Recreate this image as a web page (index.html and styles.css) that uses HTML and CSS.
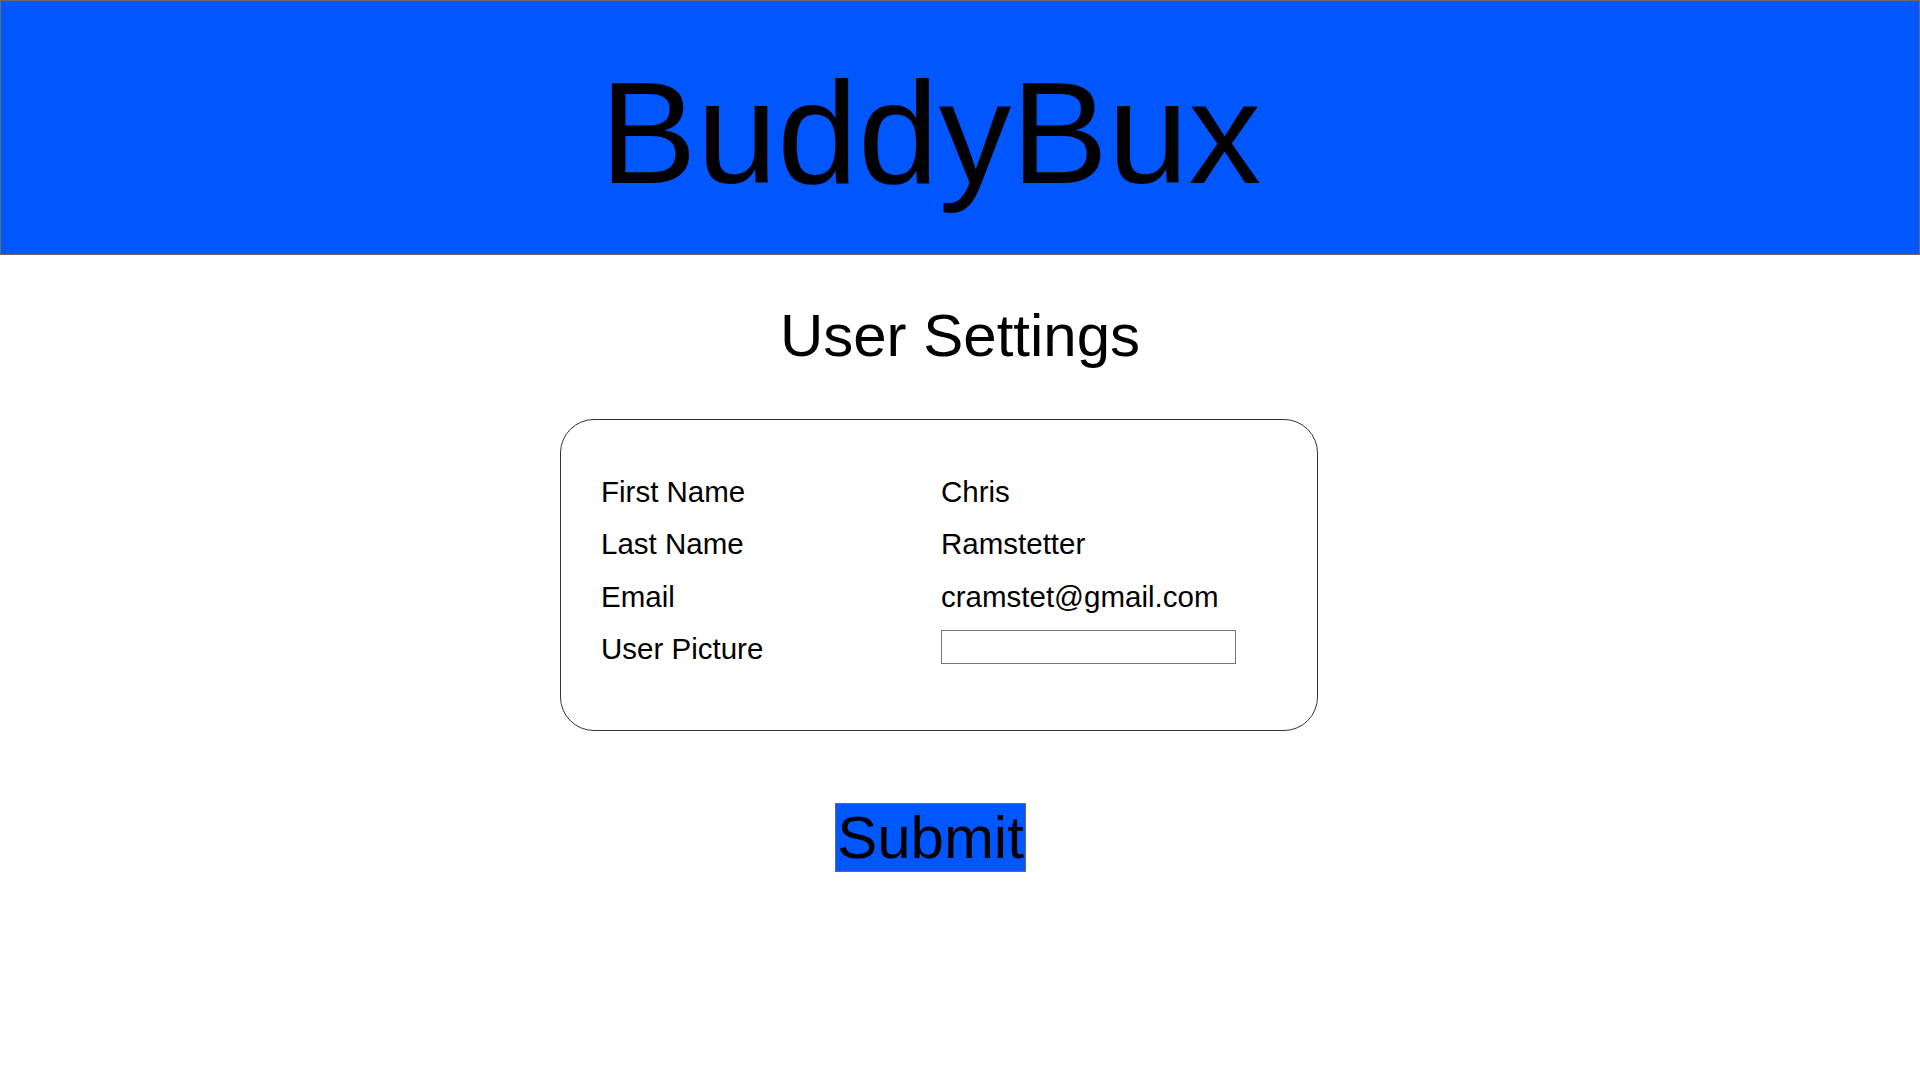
FILE: index.html
```html
<!DOCTYPE html>
<html lang="en">
<head>
    <meta charset="UTF-8">
    <meta name="viewport" content="width=device-width, initial-scale=1.0">
    <title>BuddyBux - User Settings</title>
    <link rel="stylesheet" href="styles.css">
</head>
<body>
    <header class="banner">
        <h1>BuddyBux</h1>
    </header>

    <h2 class="page-title">User Settings</h2>

    <form class="settings-form" onsubmit="return false;">
        <div class="card">
            <div class="row">
                <label>First Name</label>
                <span class="value">Chris</span>
            </div>
            <div class="row">
                <label>Last Name</label>
                <span class="value">Ramstetter</span>
            </div>
            <div class="row">
                <label>Email</label>
                <span class="value">cramstet@gmail.com</span>
            </div>
            <div class="row">
                <label for="user-picture">User Picture</label>
                <input type="text" id="user-picture" class="picture-input">
            </div>
        </div>
        <button type="submit" class="submit-btn">Submit</button>
    </form>
</body>
</html>
```

FILE: styles.css
```css
body {
    margin: 0;
    font-family: "Liberation Sans", Arial, Helvetica, sans-serif;
    color: #000;
    background-color: #fff;
}
.banner {
    background-color: #0057ff;
    border: 1px solid #6b6b6b;
    padding: 60px 59px 48px 0;
    text-align: center;
}
.banner h1 {
    margin: 0;
    font-size: 145px;
    font-weight: normal;
    line-height: 1;
}
.page-title {
    margin: 51px 0 0;
    text-align: center;
    font-size: 60px;
    font-weight: normal;
    line-height: 1;
}
.settings-form {
    display: flex;
    flex-direction: column;
    align-items: center;
    padding-right: 42px;
    margin-top: 53px;
}
.card {
    width: 756px;
    box-sizing: content-box;
    border: 1px solid #333;
    border-radius: 34px;
    padding: 45.5px 0 54.5px 0;
}
.row {
    display: grid;
    grid-template-columns: 340px 1fr;
    padding-left: 40px;
    height: 52.5px;
    line-height: 52.5px;
    font-size: 29.5px;
}
.row label {
    display: block;
}
.picture-input {
    align-self: start;
    margin-top: 6.5px;
    width: 295px;
    height: 34px;
    box-sizing: border-box;
    border: 1px solid #777;
    border-radius: 0;
    padding: 0 6px;
    font-size: 18px;
    font-family: inherit;
}
.submit-btn {
    margin-top: 72px;
    margin-right: 17px;
    background-color: #0057ff;
    color: #000;
    border: 1px solid #6b6b6b;
    padding: 0 1px;
    font-family: inherit;
    font-size: 60px;
    line-height: 67px;
    cursor: pointer;
}
```
